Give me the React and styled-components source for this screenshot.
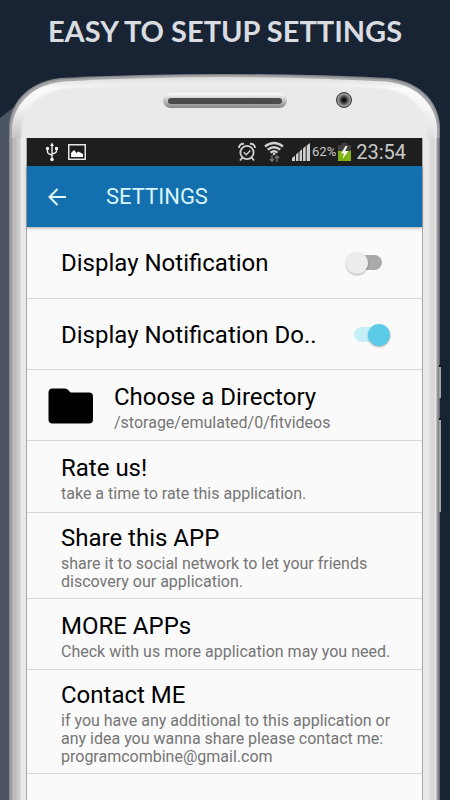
import React, { useState } from "react";
import styled, { createGlobalStyle } from "styled-components";

const GlobalStyle = createGlobalStyle`
  * { box-sizing: border-box; }
  body {
    margin: 0;
    background: #182333;
    font-family: Roboto, "Liberation Sans", sans-serif;
  }
`;

const Page = styled.div`
  display: flex;
  flex-direction: column;
  min-height: 100vh;
  position: relative;
  overflow: hidden;
`;

const Headline = styled.h1`
  margin: 0;
  height: 74px;
  padding-top: 14px;
  font: 700 29px/34px Lato, "Open Sans", sans-serif;
  color: #d9dce0;
  text-align: center;
  white-space: nowrap;
`;

const LongShadow = styled.div`
  position: absolute;
  left: 0;
  top: 90px;
  bottom: 0;
  width: 36px;
  background: #4b5563;
  clip-path: polygon(0 28px, 36px 0, 36px 100%, 0 100%);
`;

const Phone = styled.div`
  position: relative;
  flex: 1;
  display: flex;
  flex-direction: column;
  margin: 0 10px 0 9px;
`;

const Head = styled.div`
  position: relative;
  height: 64px;
  flex: none;
`;

const HeadShape = styled.svg`
  position: absolute;
  inset: 0;
  width: 100%;
  height: 100%;
`;

const HeadParts = styled.div`
  position: relative;
  display: grid;
  grid-template-columns: 1fr 124px 1fr;
  align-items: center;
  padding-top: 18px;
`;

const Speaker = styled.div`
  grid-column: 2;
  height: 15px;
  padding: 5px;
  border-radius: 8px;
  background: linear-gradient(#fdfdfd, #c9c9c9 45%, #858585);

  &::before {
    content: "";
    display: block;
    height: 6px;
    border-radius: 3px;
    background: #4b4b4b;
  }
`;

const Camera = styled.div`
  width: 16px;
  height: 16px;
  margin-left: 49px;
  border-radius: 50%;
  border: 1px solid #343434;
  background: radial-gradient(circle, #111 0 15%, #4d4d4d 35%, #999 60%, #777 100%);
`;

const Casing = styled.div`
  flex: 1;
  display: flex;
  padding: 0 17px;
  background:
    linear-gradient(90deg, #8f8f94 0 1px, #a4a2a6 2px, #9c9a9e 3px, #c2c2c2 4px, #b8b8b8 6px, #c4c4c4 8px, #d2d2d2 11px, #e4e4e4 12px, #ebe9ea 13px) left / 17px 100% no-repeat,
    linear-gradient(270deg, #66696e 0 1px, #a0a1a4 2px, #909092 3px, #e9e9e9 4px, #d8d8d8 6px, #dadada 9px, #e2e2e2 11px, #ebe9ea 12px) right / 17px 100% no-repeat;
`;

const SideButton = styled.div`
  position: absolute;
  right: -1px;
  top: ${(p) => p.$top}px;
  width: 2px;
  height: ${(p) => p.$height}px;
  background: #a5a6a8;
  border-top: 2px solid #0e1520;
`;

const Screen = styled.main`
  flex: 1;
  min-width: 0;
  display: flex;
  flex-direction: column;
  background: #fafafa;
  border: solid #a8a8a8;
  border-width: 0 1px;
`;

const StatusBar = styled.div`
  display: flex;
  align-items: center;
  justify-content: space-between;
  height: 28px;
  padding: 0 16px 0 18px;
  background: #1e1e1e;
  color: #c9c9c9;
`;

const StatusGroup = styled.div`
  display: flex;
  align-items: center;
  gap: ${(p) => p.$gap}px;
`;

const Percent = styled.span`
  font-size: 13px;
  line-height: 16px;
`;

const Clock = styled.time`
  margin-left: 3px;
  font-size: 20px;
  line-height: 24px;
`;

const AppBar = styled.header`
  position: relative;
  display: flex;
  align-items: center;
  height: 61px;
  padding-left: 20px;
  gap: 39px;
  background: #146fae;
  box-shadow: 0 1px 3px rgba(0, 0, 0, 0.35);
`;

const BackButton = styled.button`
  display: flex;
  padding: 0;
  border: 0;
  background: none;
  color: #e2f7fc;
  cursor: pointer;
`;

const BarTitle = styled.h2`
  margin: 0;
  font-size: 22px;
  line-height: 28px;
  font-weight: 400;
  color: #d9f4fb;
`;

const List = styled.ul`
  margin: 0;
  padding: 0;
  list-style: none;
`;

const Row = styled.li`
  display: flex;
  align-items: center;
  min-height: ${(p) => (p.$tall ? 72 : 71)}px;
  padding: 8px 32px 7px ${(p) => (p.$icon ? 21 : 34)}px;
  gap: 20px;
  border-bottom: 1px solid #d8d8d8;
`;

const RowText = styled.div`
  flex: 1;
  min-width: 0;
`;

const RowTitle = styled.div`
  font-size: 24px;
  line-height: 34px;
  color: #000;
  white-space: nowrap;
`;

const RowLabel = styled(RowTitle).attrs({ as: "label" })`
  flex: 1;
`;

const RowNote = styled.div`
  font-size: 16px;
  line-height: 18px;
  color: #757575;
  margin-right: -20px;
`;

const Switch = styled.input`
  appearance: none;
  position: relative;
  flex: none;
  width: 44px;
  height: 22px;
  margin: 0;
  cursor: pointer;

  &::before {
    content: "";
    position: absolute;
    inset: 3px 8px 4px;
    border-radius: 8px;
    background: #a9a9a9;
  }
  &::after {
    content: "";
    position: absolute;
    left: 0;
    top: 0;
    width: 22px;
    height: 22px;
    border-radius: 50%;
    background: #ececec;
    box-shadow: 0 1px 2px rgba(0, 0, 0, 0.3);
  }
  &:checked::before { background: #c5eef7; }
  &:checked::after { left: 22px; background: #5ccbe8; }
`;

const UsbIcon = () => (
  <svg width="14" height="20" viewBox="0 0 14 20" fill="none" stroke="#f0f0f0" strokeWidth="1.4">
    <path d="M7 3v14M2.5 7v2.5q0 2.5 4.5 3.5M11.500 7v2q0 2-4.500 3" />
    <path d="M7 0.500L9 4H5z" fill="#f0f0f0" stroke="none" />
    <circle cx="7" cy="17.500" r="1.800" fill="#f0f0f0" stroke="none" />
    <circle cx="2.500" cy="6.500" r="1.700" fill="#f0f0f0" stroke="none" />
    <path d="M10 5h3v3h-3z" fill="#f0f0f0" stroke="none" />
  </svg>
);

const PictureIcon = () => (
  <svg width="18" height="16" viewBox="0 0 18 16">
    <rect x="0.750" y="0.750" width="16.500" height="14.500" fill="none" stroke="#e6e6e6" strokeWidth="1.500" />
    <path d="M3 13V9l3-3 2.500 3 2-1.500L15 10v3z" fill="#fff" />
  </svg>
);

const AlarmIcon = () => (
  <svg width="18" height="20" viewBox="0 0 18 20" fill="none" stroke="#cfcfcf" strokeWidth="1.900">
    <circle cx="9" cy="10.500" r="6.600" />
    <path d="M5.800 10.200l2.500 2.500 4-4.200" strokeWidth="1.500" />
    <path d="M1 6C1 3 3 1.500 6 1.700M17 6c0-3-2-4.500-5-4.300M4.500 15.500L2 18.500M13.500 15.500l2.500 3" />
  </svg>
);

const WifiIcon = () => (
  <svg width="20" height="22" viewBox="0 0 20 22" fill="none" stroke="#cfcfcf" strokeWidth="2.300">
    <path d="M1 5.500Q10-1.500 19 5.500M3.700 8.700q6.300-5 12.600 0M6.500 11.700q3.500-2.800 7 0" />
    <circle cx="10" cy="13" r="1.300" fill="#cfcfcf" stroke="none" />
    <path d="M8 14v6M5.800 18L8 20.300l2-2.300M13 21v-6M11 17.300l2-2.300 2.200 2.300" stroke="#777" strokeWidth="1.300" />
  </svg>
);

const SignalIcon = () => (
  <svg width="18" height="18" viewBox="0 0 18 18" fill="#cfcfcf">
    <path d="M0 18v-3l3-2.500V18zM4 18v-6.500L6.500 9v9zM7.500 18V8.500L10 6v12zM11 18V5.500L13.700 3v15zM14.700 18V2.500L18 0v18z" />
  </svg>
);

const BatteryIcon = () => (
  <svg width="13" height="20" viewBox="0 0 13 20">
    <path d="M4 1h5v2h4v16H0V3h4z" fill="#3f403c" />
    <path d="M0 9h13v10H0z" fill="#7fb512" />
    <path d="M7.500 4L3 11.500h3L4.500 17 10.500 9H7.200L9.500 4z" fill="#f4f4f4" />
  </svg>
);

const BackIcon = () => (
  <svg width="20" height="20" viewBox="0 0 20 20" fill="none" stroke="currentColor" strokeWidth="2">
    <path d="M19 10H3M10.500 2L2.500 10l8 8" />
  </svg>
);

const FolderIcon = () => (
  <svg width="46" height="36" viewBox="0 0 46 36">
    <path d="M4.500 0.500H17q2 0 3.200 1.500L22.500 4.500H41q4 0 4 4V31.500q0 4-4 4H4.500q-4 0-4-4v-27q0-4 4-4z" fill="#000" />
  </svg>
);

const PhoneTop = () => (
  <HeadShape viewBox="0 0 431 64" preserveAspectRatio="none" aria-hidden="true">
    <defs>
      <linearGradient id="bevel" x1="0" x2="0" y1="0" y2="1">
        <stop offset="0" stopColor="#dcdcdc" />
        <stop offset="0.200" stopColor="#fbfbfb" />
        <stop offset="0.500" stopColor="#f2f2f2" />
        <stop offset="1" stopColor="#c4c4c4" />
      </linearGradient>
      <linearGradient id="bevelRight" x1="0" x2="1" y1="0" y2="0">
        <stop offset="0.900" stopColor="#fafafa" stopOpacity="0" />
        <stop offset="1" stopColor="#fafafa" stopOpacity="0.600" />
      </linearGradient>
      <filter id="soft" x="-5%" y="-10%" width="110%" height="130%">
        <feGaussianBlur stdDeviation="1.300" />
      </filter>
    </defs>
    <path d="M0 64V54C0 32 16 8 51 4Q130 0 216 0T380 4C415 8 431 32 431 54V64z" fill="#85868a" />
    <path d="M1 64V55C1 33 17 9 52 5.500Q130 1 216 1T379 5.500C414 9 430 33 430 55V64z" fill="#a6a5a9" />
    <path d="M3 64V56C3 35 19 11 54 7.500Q130 3 216 3T377 7.500C412 11 428 35 428 56V64z" fill="url(#bevel)" />
    <path d="M3 64V56C3 35 19 11 54 7.500Q130 3 216 3T377 7.500C412 11 428 35 428 56V64z" fill="url(#bevelRight)" />
    <path d="M12 80V58C12 42 24 18 58 14Q130 10 216 10T373 14C407 18 419 42 419 58V80z" fill="#ebe9ea" filter="url(#soft)" />
  </HeadShape>
);

const items = [
  { title: "Rate us!", note: "take a time to rate this application.", tall: true },
  { title: "Share this APP", note: "share it to social network to let your friends discovery our application." },
  { title: "MORE APPs", note: "Check with us more application may you need." },
  {
    title: "Contact ME",
    note: "if you have any additional to this application or any idea you wanna share please contact me: programcombine@gmail.com",
  },
];

export default function App() {
  const [notify, setNotify] = useState(false);
  const [notifyDone, setNotifyDone] = useState(true);

  return (
    <Page>
      <GlobalStyle />
      <LongShadow />
      <Headline>EASY TO SETUP SETTINGS</Headline>
      <Phone>
        <SideButton $top={291} $height={33} />
        <SideButton $top={344} $height={94} />
        <Head>
          <PhoneTop />
          <HeadParts>
            <Speaker />
            <Camera />
          </HeadParts>
        </Head>
        <Casing>
          <Screen>
            <StatusBar>
              <StatusGroup $gap={9}>
                <UsbIcon />
                <PictureIcon />
              </StatusGroup>
              <StatusGroup $gap={2}>
                <StatusGroup $gap={8}>
                  <AlarmIcon />
                  <WifiIcon />
                  <SignalIcon />
                </StatusGroup>
                <Percent>62%</Percent>
                <BatteryIcon />
                <Clock>23:54</Clock>
              </StatusGroup>
            </StatusBar>
            <AppBar>
              <BackButton aria-label="Back">
                <BackIcon />
              </BackButton>
              <BarTitle>SETTINGS</BarTitle>
            </AppBar>
            <List>
              <Row $tall>
                <RowLabel htmlFor="notify">Display Notification</RowLabel>
                <Switch id="notify" type="checkbox" role="switch" checked={notify} onChange={(e) => setNotify(e.target.checked)} />
              </Row>
              <Row>
                <RowLabel htmlFor="notify-done">Display Notification Do..</RowLabel>
                <Switch id="notify-done" type="checkbox" role="switch" checked={notifyDone} onChange={(e) => setNotifyDone(e.target.checked)} />
              </Row>
              <Row $icon>
                <FolderIcon />
                <RowText>
                  <RowTitle>Choose a Directory</RowTitle>
                  <RowNote>/storage/emulated/0/fitvideos</RowNote>
                </RowText>
              </Row>
              {items.map((item) => (
                <Row key={item.title} $tall={item.tall}>
                  <RowText>
                    <RowTitle>{item.title}</RowTitle>
                    <RowNote>{item.note}</RowNote>
                  </RowText>
                </Row>
              ))}
            </List>
          </Screen>
        </Casing>
      </Phone>
    </Page>
  );
}
